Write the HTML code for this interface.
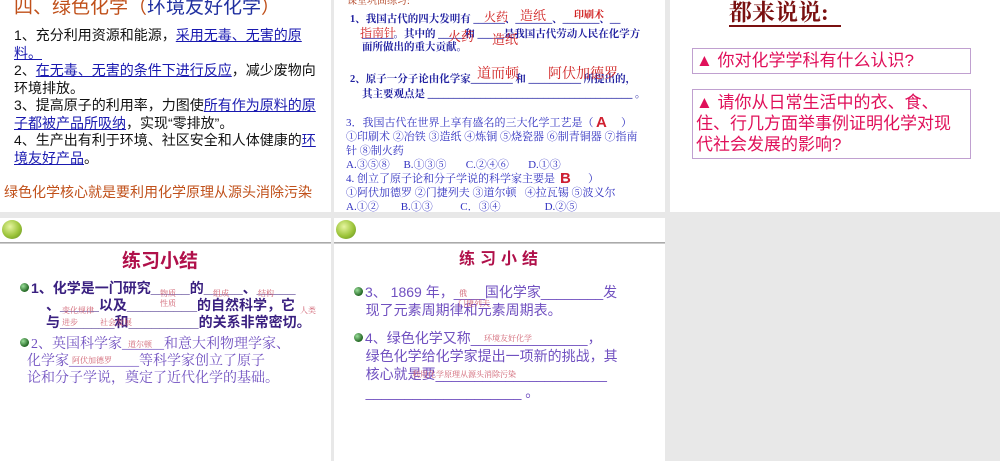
<!DOCTYPE html>
<html><head><meta charset="utf-8"><style>
body{margin:0;width:1000px;height:461px;background:#e8e8e8;position:relative;overflow:hidden;font-family:"Liberation Sans","Noto Sans CJK SC",sans-serif}
.s{position:absolute;background:#fff;overflow:hidden}
.a{position:absolute;white-space:nowrap}
u{text-decoration:underline}
.bl{color:#1a1ab0}
.apple{position:absolute;left:2px;top:2px;width:20px;height:19px;border-radius:50%;background:radial-gradient(circle at 40% 35%,#e6f5a0,#9cc43a 55%,#5c8a1c)}
.hl{position:absolute;left:0;right:0;top:24px;height:2px;background:linear-gradient(#999,#ddd)}
.dot{display:inline-block;width:9px;height:9px;border-radius:50%;background:radial-gradient(circle at 35% 35%,#9d9,#262 70%);margin-right:2px;vertical-align:1px}
.sm{position:absolute;font-size:8px;color:#d06070;white-space:nowrap;font-family:"Noto Serif CJK SC",serif}
</style></head><body>

<div class="s" style="left:0;top:0;width:331px;height:212px">
<div class="a" style="left:14px;top:-8px;font-size:19px;color:#c0501a">四、绿色化学（<span class="bl" style="color:#2030a0">环境友好化学</span>）</div>
<div style="position:absolute;left:14px;top:27px;width:306px;font-size:14px;line-height:17.5px;color:#111">
1、充分利用资源和能源，<u class="bl">采用无毒、无害的原料。</u><br>
2、<u class="bl">在无毒、无害的条件下进行反应</u>，减少废物向环境排放。<br>
3、提高原子的利用率，力图使<u class="bl">所有作为原料的原子都被产品所吸纳</u>，实现“零排放”。<br>
4、生产出有利于环境、社区安全和人体健康的<u class="bl">环境友好产品</u>。</div>
<div class="a" style="left:4px;top:182px;font-size:14px;color:#c0501a">绿色化学核心就是要利用化学原理从源头消除污染</div>
</div>

<div class="s" style="left:334px;top:0;width:331px;height:212px;font-family:'Liberation Serif','Noto Serif CJK SC',serif;color:#2020a0">
<div class="a" style="left:13px;top:-8px;font-size:10px;color:#b04020">课堂巩固练习:</div>
<div class="a" style="left:16px;top:11px;font-size:10.5px;font-weight:bold">1、我国古代的四大发明有 ______、_______、_______、__</div>
<div class="a" style="left:28px;top:26px;font-size:10.5px;font-weight:bold">______。其中的 _____和 _____是我国古代劳动人民在化学方</div>
<div class="a" style="left:28px;top:39px;font-size:10.5px;font-weight:bold">面所做出的重大贡献。</div>
<div class="a" style="left:150px;top:8px;font-size:12px;color:#d02020">火药</div>
<div class="a" style="left:186px;top:5px;font-size:13px;color:#d02020">造纸</div>
<div class="a" style="left:240px;top:6px;font-size:10px;color:#d02020;font-weight:bold">印刷术</div>
<div class="a" style="left:26px;top:24px;font-size:12px;color:#d02020">指南针</div>
<div class="a" style="left:114px;top:26px;font-size:13px;color:#d02020">火药</div>
<div class="a" style="left:158px;top:29px;font-size:13px;color:#d02020">造纸</div>
<div class="a" style="left:16px;top:71px;font-size:10.5px;font-weight:bold">2、原子一分子论由化学家________ 和 __________ 所提出的，</div>
<div class="a" style="left:28px;top:86px;font-size:10.5px;font-weight:bold">其主要观点是 _______________________________________ 。</div>
<div class="a" style="left:143px;top:63px;font-size:14px;color:#d02020">道而顿</div>
<div class="a" style="left:214px;top:63px;font-size:14px;color:#d02020">阿伏加德罗</div>
<div style="position:absolute;left:12px;top:116px;font-size:11px;line-height:14px;color:#3030c0">
3．我国古代在世界上享有盛名的三大化学工艺是（&nbsp;&nbsp;&nbsp;&nbsp;&nbsp;&nbsp;&nbsp;&nbsp;&nbsp;&nbsp;）<br>
①印刷术 ②冶铁 ③造纸 ④炼铜 ⑤烧瓷器 ⑥制青铜器 ⑦指南<br>针 ⑧制火药<br>
A.③⑤⑧&nbsp;&nbsp;&nbsp;&nbsp;&nbsp;B.①③⑤&nbsp;&nbsp;&nbsp;&nbsp;&nbsp;&nbsp;&nbsp;C.②④⑥&nbsp;&nbsp;&nbsp;&nbsp;&nbsp;&nbsp;&nbsp;D.①③<br>
4. 创立了原子论和分子学说的科学家主要是（&nbsp;&nbsp;&nbsp;&nbsp;&nbsp;&nbsp;&nbsp;&nbsp;）<br>
①阿伏加德罗 ②门捷列夫 ③道尔顿&nbsp;&nbsp;&nbsp;④拉瓦锡 ⑤波义尔<br>
A.①②&nbsp;&nbsp;&nbsp;&nbsp;&nbsp;&nbsp;&nbsp;&nbsp;B.①③&nbsp;&nbsp;&nbsp;&nbsp;&nbsp;&nbsp;&nbsp;&nbsp;&nbsp;&nbsp;C．③④&nbsp;&nbsp;&nbsp;&nbsp;&nbsp;&nbsp;&nbsp;&nbsp;&nbsp;&nbsp;&nbsp;&nbsp;&nbsp;&nbsp;&nbsp;&nbsp;D.②⑤</div>
<div class="a" style="left:262px;top:114px;font-size:15px;color:#d02030;font-weight:bold;font-family:'Liberation Sans',sans-serif">A</div>
<div class="a" style="left:226px;top:170px;font-size:15px;color:#d02030;font-weight:bold;font-family:'Liberation Sans',sans-serif">B</div>
</div>

<div class="s" style="left:670px;top:0;width:330px;height:212px">
<div class="a" style="left:59px;top:1px;font-size:23px;font-weight:bold;color:#7a1010;font-family:'Liberation Serif','Noto Serif CJK SC',serif;border-bottom:2px solid #7a1010;padding-right:12px;line-height:24px">都来说说:</div>
<div style="position:absolute;left:22px;top:48px;color:#e0105a;font-size:17px;line-height:24px;padding-left:3px;box-sizing:border-box;width:279px;height:26px;border:1px solid #c0a0d0">▲ 你对化学学科有什么认识?</div>
<div style="position:absolute;left:22px;top:89px;width:279px;height:70px;border:1px solid #c0a0d0;color:#e0105a;font-size:17px;line-height:21px;padding:2px 3px;box-sizing:border-box">▲ 请你从日常生活中的衣、食、住、行几方面举事例证明化学对现代社会发展的影响?</div>
</div>

<div class="s" style="left:0;top:218px;width:331px;height:243px">
<div class="apple"></div><div class="hl"></div>
<div class="a" style="left:122px;top:28px;font-size:19px;font-weight:bold;color:#b0104a">练习小结</div>
<div class="a" style="left:20px;top:60px;font-size:14px;font-weight:bold;color:#3a2080"><span class="dot"></span>1、化学是一门研究_____的_____、_____</div>
<div class="a" style="left:46px;top:77px;font-size:14px;font-weight:bold;color:#3a2080">、_____以及_________的自然科学，它</div>
<div class="a" style="left:46px;top:94px;font-size:14px;font-weight:bold;color:#3a2080">与_______和_________的关系非常密切。</div>
<div class="sm" style="left:160px;top:70px">物质</div><div class="sm" style="left:160px;top:80px">性质</div>
<div class="sm" style="left:213px;top:70px">组成</div><div class="sm" style="left:258px;top:70px">结构</div>
<div class="sm" style="left:62px;top:87px">变化规律</div><div class="sm" style="left:300px;top:87px">人类</div>
<div class="sm" style="left:62px;top:99px">进步</div><div class="sm" style="left:100px;top:99px">社会发展</div>
<div style="position:absolute;left:20px;top:118px;font-size:14px;line-height:17px;color:#7050c0;font-family:'Liberation Serif','Noto Serif CJK SC',serif"><span class="dot"></span>2、英国科学家______和意大利物理学家、<br>&nbsp;&nbsp;化学家__________等科学家创立了原子<br>&nbsp;&nbsp;论和分子学说，奠定了近代化学的基础。</div>
<div class="sm" style="left:128px;top:121px">道尔顿</div><div class="sm" style="left:72px;top:137px">阿伏加德罗</div>
</div>

<div class="s" style="left:334px;top:218px;width:331px;height:243px">
<div class="apple"></div><div class="hl"></div>
<div class="a" style="left:125px;top:27px;font-size:16px;font-weight:bold;color:#b0104a;letter-spacing:5px">练习小结</div>
<div style="position:absolute;left:20px;top:65px;font-size:14px;line-height:18px;color:#7050c0"><span class="dot"></span>3、 1869 年，____国化学家________发<br>&nbsp;&nbsp;&nbsp;现了元素周期律和元素周期表。</div>
<div class="sm" style="left:125px;top:70px">俄</div><div class="sm" style="left:124px;top:80px">门捷列夫</div>
<div style="position:absolute;left:20px;top:111px;font-size:14px;line-height:18px;color:#7050c0"><span class="dot"></span>4、绿色化学又称_______________，<br>&nbsp;&nbsp;&nbsp;绿色化学给化学家提出一项新的挑战，其<br>&nbsp;&nbsp;&nbsp;核心就是要______________________<br>&nbsp;&nbsp;&nbsp;____________________ 。</div>
<div class="sm" style="left:150px;top:115px">环境友好化学</div><div class="sm" style="left:78px;top:151px">利用化学原理从源头消除污染</div>
</div>

</body></html>
